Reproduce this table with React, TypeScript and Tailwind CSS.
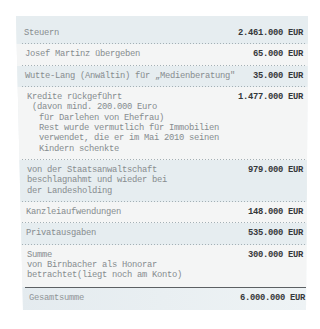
type Row = {
  lines: string[];
  amount: string;
  tone: 'blue' | 'plain';
  pl: string;
  indent?: string[];
};

const rows: Row[] = [
  { lines: ['Steuern'], amount: '2.461.000 EUR', tone: 'blue', pl: 'pl-[8px]' },
  { lines: ['Josef Martinz übergeben'], amount: '65.000 EUR', tone: 'plain', pl: 'pl-[9px]' },
  { lines: ['Wutte-Lang (Anwältin) für „Medienberatung"'], amount: '35.000 EUR', tone: 'blue', pl: 'pl-[9px]' },
  {
    lines: [
      'Kredite rückgeführt',
      '(davon mind. 200.000 Euro',
      'für Darlehen von Ehefrau)',
      'Rest wurde vermutlich für Immobilien',
      'verwendet, die er im Mai 2010 seinen',
      'Kindern schenkte',
    ],
    indent: ['', 'pl-[5px]', 'pl-[12px]', 'pl-[12px]', 'pl-[12px]', 'pl-[12px]'],
    amount: '1.477.000 EUR',
    tone: 'plain',
    pl: 'pl-[11px]',
  },
  {
    lines: ['von der Staatsanwaltschaft', 'beschlagnahmt und wieder bei', 'der Landesholding'],
    amount: '979.000 EUR',
    tone: 'blue',
    pl: 'pl-[11px]',
  },
  { lines: ['Kanzleiaufwendungen'], amount: '148.000 EUR', tone: 'plain', pl: 'pl-[10px]' },
  { lines: ['Privatausgaben'], amount: '535.000 EUR', tone: 'blue', pl: 'pl-[10px]' },
  {
    lines: ['Summe', 'von Birnbacher als Honorar', 'betrachtet(liegt noch am Konto)'],
    amount: '300.000 EUR',
    tone: 'plain',
    pl: 'pl-[11px]',
  },
];

function Dots() {
  return (
    <div className="ml-[6px] mr-[2px] h-px bg-[linear-gradient(to_right,#a4b0b5_1px,transparent_1px)] bg-[length:3px_1px]" />
  );
}

export default function App() {
  return (
    <div className="h-[329px] w-[320px] overflow-hidden bg-white pl-[16px] pt-[16px] font-['Liberation_Mono','Courier_New',monospace] text-[8.8px] leading-[10.33px] tracking-[-0.28px]">
      <div className="w-[292px] bg-[linear-gradient(to_bottom,#e7edf0,#eef2f4)] [clip-path:polygon(0_0,100%_0,calc(100%-2px)_100%,7px_100%)]">
        {rows.map((r, i) => (
          <div key={i} className={r.tone === 'blue' ? 'bg-[#e6edf0]' : 'bg-[#f4f5f5]'}>
            <div className={`flex justify-between pr-[5px] ${r.pl} ${i === 0 ? 'pt-[12px]' : 'pt-[5px]'} ${i === rows.length - 1 ? 'pb-[6px]' : 'pb-[5px]'}`}>
              <div className="text-[#868c8f]">
                {r.lines.map((l, j) => (
                  <div key={j} className={`whitespace-pre ${r.indent ? r.indent[j] : ''}`}>
                    {l}
                  </div>
                ))}
              </div>
              <div className="whitespace-nowrap font-bold text-[#35383a]">{r.amount}</div>
            </div>
            {i < rows.length - 1 && <Dots />}
          </div>
        ))}
        <div className="bg-[linear-gradient(to_right,#e4ebef,#eef3f5)]">
          <div className="ml-[9px] mr-[2px] h-[1.5px] bg-[#5c6063]" />
          <div className="flex justify-between pb-[7px] pl-[13px] pr-[3px] pt-[5px]">
            <div className="text-[#8f9497]">Gesamtsumme</div>
            <div className="whitespace-nowrap font-bold text-[#35383a]">6.000.000 EUR</div>
          </div>
        </div>
      </div>
    </div>
  );
}
